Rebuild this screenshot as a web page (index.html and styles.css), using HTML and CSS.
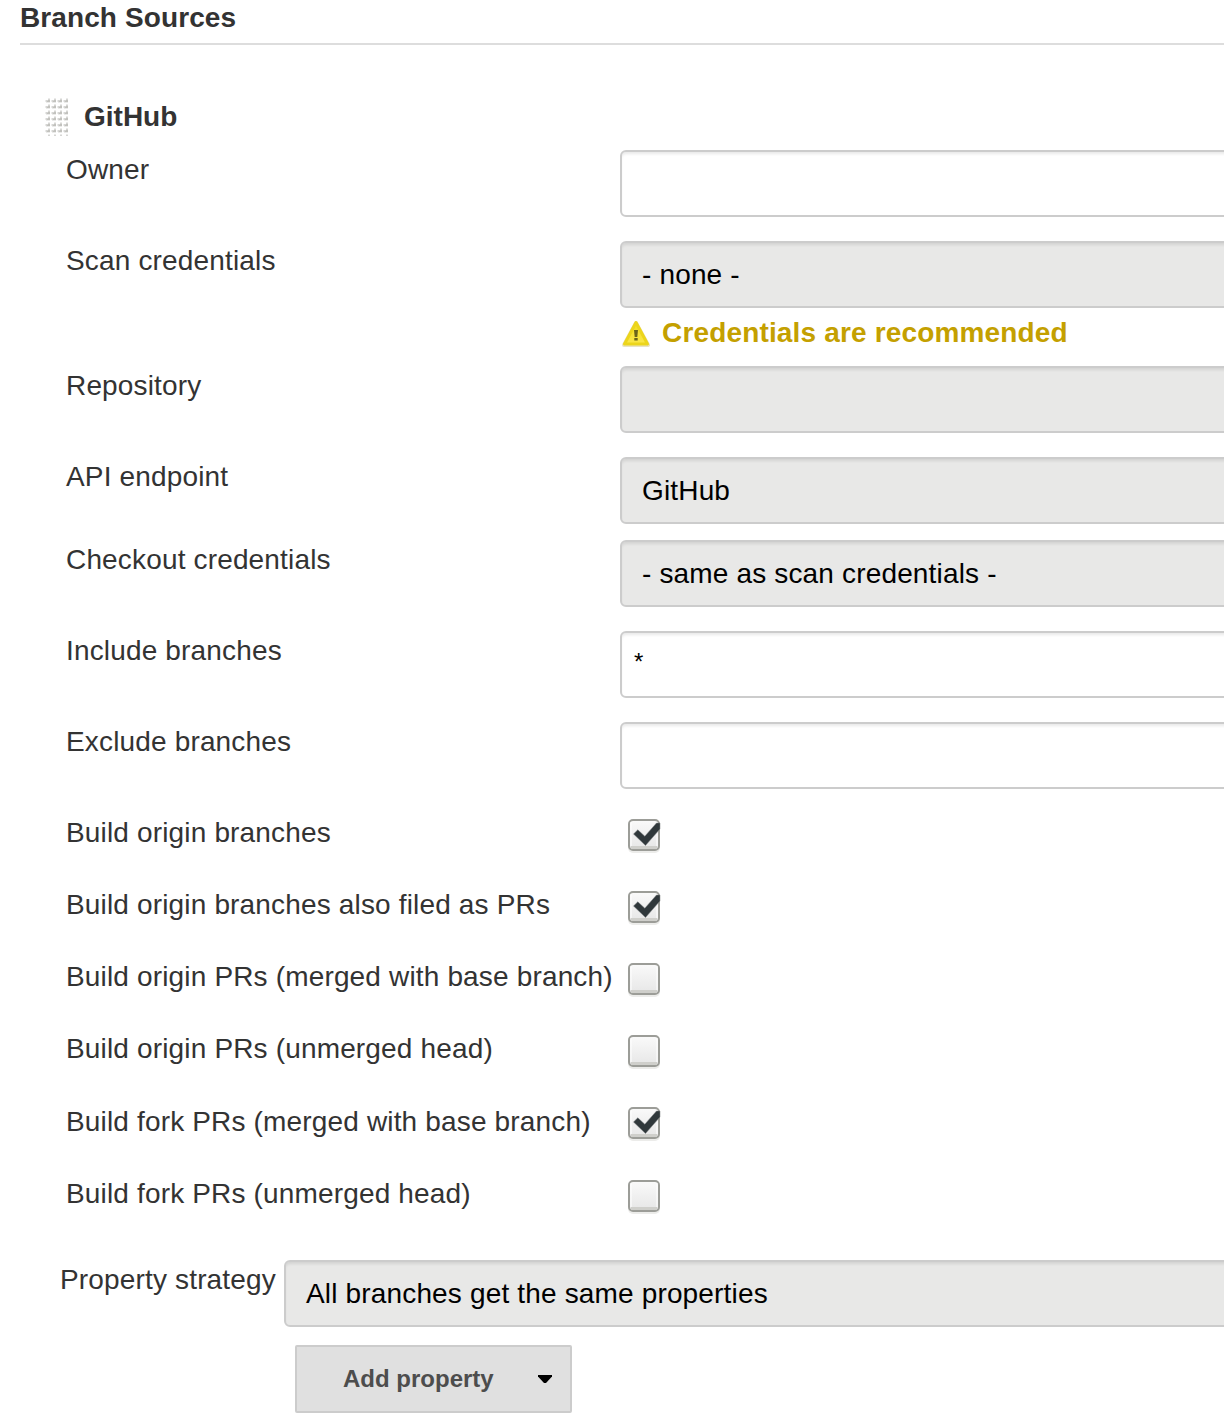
FILE: index.html
```html
<!DOCTYPE html>
<html lang="en">
<head>
<meta charset="utf-8">
<title>Branch Sources</title>
<link rel="stylesheet" href="styles.css">
</head>
<body>
<svg class="defs" width="0" height="0" aria-hidden="true">
  <defs>
    <linearGradient id="box" x1="0" y1="0" x2="0" y2="1"><stop offset="0" stop-color="#fafafa"/><stop offset="1" stop-color="#e6e6e6"/></linearGradient>
    <linearGradient id="warn" x1="0" y1="0" x2="0" y2="1"><stop offset="0" stop-color="#f0dc20"/><stop offset="1" stop-color="#fbe74a"/></linearGradient>
    <pattern id="dots" width="6" height="6" patternUnits="userSpaceOnUse">
      <path d="M1 2h2V1h2v3H1z" fill="#d6d6d4"/><path d="M2 3h3v1H2zM3 2h2v1H3z" fill="#c2c2be"/><path d="M0 2h1v2H0zM1 4h4v1H1zM3 0h2v1H3z" fill="#ebebea"/>
    </pattern>
    <symbol id="unchecked" viewBox="0 0 34 36">
      <rect x="1" y="3" width="32" height="32" rx="5" fill="#ececea"/>
      <rect x="2" y="2" width="30" height="30" rx="4" fill="url(#box)" stroke="#9c9d98" stroke-width="2"/>
      <path d="M4 29.5h26" stroke="#cfcfcb" stroke-width="3"/>
      <path d="M4 4v24M30 4v24" stroke="#fff" stroke-width="1"/>
    </symbol>
    <symbol id="checked" viewBox="0 0 34 36">
      <use href="#unchecked"/>
      <path d="M6.5 16 10.8 11.8l7 6.4L29.5 5h3.5v6L18.5 27.5z" fill="#30383b" stroke="#7f8485" stroke-opacity=".5" stroke-width="1"/>
    </symbol>
  </defs>
</svg>
<main class="config">
  <h1 class="title">Branch Sources</h1>
  <section class="source">
    <header class="source-head">
      <svg class="handle" width="23" height="38"><rect width="23" height="38" fill="url(#dots)"/></svg>
      <h2 class="source-name">GitHub</h2>
    </header>
    <div class="row"><span class="label">Owner</span><div class="field"></div></div>
    <div class="row row-warn"><span class="label">Scan credentials</span>
      <div class="control"><div class="field select">- none -</div>
        <div class="warning">
          <svg width="30" height="30" viewBox="0 0 30 30"><path d="M15 4 27 26H3z" fill="#c8b765" stroke="#d8cc91" stroke-width="4" stroke-linejoin="round" opacity=".55"/><path d="M15 3.5 26.5 25h-23z" fill="url(#warn)" stroke="#ecd51c" stroke-width="3" stroke-linejoin="round"/><path d="M13 11h4l-.7 7h-2.6zM13.3 19h3.4v2.5h-3.4z" fill="#6b641b"/></svg>
          <span>Credentials are recommended</span>
        </div>
      </div>
    </div>
    <div class="row"><span class="label">Repository</span><div class="field select"></div></div>
    <div class="row row-tight"><span class="label">API endpoint</span><div class="field select">GitHub</div></div>
    <div class="row"><span class="label">Checkout credentials</span><div class="field select">- same as scan credentials -</div></div>
    <div class="row"><span class="label">Include branches</span><div class="field input">*</div></div>
    <div class="row"><span class="label">Exclude branches</span><div class="field"></div></div>
    <div class="row row-check"><span class="label">Build origin branches</span><svg class="check"><use href="#checked"/></svg></div>
    <div class="row row-check"><span class="label">Build origin branches also filed as PRs</span><svg class="check"><use href="#checked"/></svg></div>
    <div class="row row-check"><span class="label">Build origin PRs (merged with base branch)</span><svg class="check"><use href="#unchecked"/></svg></div>
    <div class="row row-check"><span class="label">Build origin PRs (unmerged head)</span><svg class="check"><use href="#unchecked"/></svg></div>
    <div class="row row-check row-fork"><span class="label">Build fork PRs (merged with base branch)</span><svg class="check"><use href="#checked"/></svg></div>
    <div class="row row-check"><span class="label">Build fork PRs (unmerged head)</span><svg class="check"><use href="#unchecked"/></svg></div>
  </section>
  <section class="strategy">
    <span class="label">Property strategy</span>
    <div class="strategy-control">
      <div class="field select">All branches get the same properties</div>
      <button class="add" type="button"><span>Add property</span><svg width="16" height="9" viewBox="0 0 16 9"><path d="M1 0h14v1.5L9 8H7L1 1.5z" fill="#000"/></svg></button>
    </div>
  </section>
</main>
</body>
</html>
```
FILE: styles.css
```css
* { box-sizing: border-box; }
body {
  margin: 0;
  overflow: hidden;
  background: #fff;
  color: #333;
  font: 28px/32px "Liberation Sans", Arial, sans-serif;
  letter-spacing: .16px;
}
.defs { position: absolute; }
svg { display: block; flex: none; }
.config { padding: 2px 0 0 20px; height: 1416px; }
.title {
  margin: 0;
  height: 43px;
  border-bottom: 2px solid #ddd;
  font-size: 28px;
  letter-spacing: .1px;
}
.source { padding: 53px 0 0 26px; }
.source-head { display: flex; height: 52px; }
.handle { margin-left: -1px; margin-right: 16px; }
.source-name { margin: 3px 0 0; font-size: 28px; letter-spacing: 0; }
.row {
  display: grid;
  grid-template-columns: 554px 1fr;
  align-items: start;
  height: 91px;
  margin-left: 20px;
}
.label { padding-top: 4px; white-space: nowrap; }
.row-warn { height: 125px; }
.row-tight { height: 83px; }
.row-check { height: 72px; }
.row-fork { height: 73px; }
.row-fork .label { padding-top: 5px; }
.field {
  height: 67px;
  margin-right: -12px;
  border: 2px solid #ccc;
  border-radius: 6px;
  box-shadow: inset 0 3px 3px -1px rgba(0, 0, 0, .09);
  color: #000;
  background: #fff;
  white-space: nowrap;
}
.select { padding: 16px 20px; background: #e8e8e7; }
.input { padding: 13px 12px; font-size: 24px; }
.warning {
  display: flex;
  gap: 11px;
  padding-top: 9px;
  padding-left: 1px;
  color: #c4a000;
  font-weight: bold;
}
.warning svg { margin-top: 2px; }
.check { width: 34px; height: 36px; margin: 5px 0 0 7px; }
.strategy {
  display: grid;
  grid-template-columns: 224px 1fr;
  margin: 14px 0 0 40px;
}
.add {
  display: flex;
  align-items: center;
  gap: 43px;
  width: 277px;
  height: 68px;
  margin: 18px 0 0 11px;
  padding: 0 0 0 46px;
  border: 2px solid #ccc;
  border-radius: 2px;
  background: #e0e0e0;
  color: #4d4d4d;
  font: bold 24px/32px "Liberation Sans", Arial, sans-serif;
  white-space: nowrap;
}
```
